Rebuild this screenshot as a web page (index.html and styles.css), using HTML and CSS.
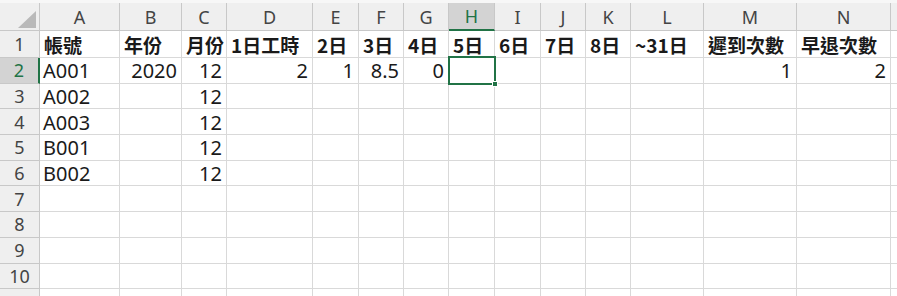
FILE: index.html
```html
<!doctype html>
<html lang="zh-Hant">
  <head>
    <meta charset="UTF-8" />
    <title>出勤紀錄</title>
    <link rel="stylesheet" href="styles.css">
  </head>
  <body>
    <div class="top-strip"></div>
    <div class="sheet" id="sheet">
      <div class="corner"><span class="corner-mark"></span></div>
    </div>
    <script>
      const cols = ["A", "B", "C", "D", "E", "F", "G", "H", "I", "J", "K", "L", "M", "N", "O"];
      const rows = [
        ["帳號", "年份", "月份", "1日工時", "2日", "3日", "4日", "5日", "6日", "7日", "8日", "~31日", "遲到次數", "早退次數"],
        ["A001", 2020, 12, 2, 1, 8.5, 0, "", "", "", "", "", 1, 2],
        ["A002", "", 12],
        ["A003", "", 12],
        ["B001", "", 12],
        ["B002", "", 12],
        [], [], [], [], []
      ];
      const activeCol = 7;
      const activeRow = 1;
      const sheet = document.getElementById("sheet");

      function cell(className, text) {
        const el = document.createElement("div");
        el.className = className;
        el.textContent = text;
        sheet.appendChild(el);
        return el;
      }

      cols.forEach((name, i) => {
        cell(i === activeCol ? "col-head active" : "col-head", name);
      });

      rows.forEach((row, r) => {
        cell(r === activeRow ? "row-head active" : "row-head", r + 1);
        cols.forEach((_, c) => {
          const value = row[c] === undefined ? "" : row[c];
          let cls = "cell";
          if (typeof value === "number") cls += " num";
          if (r === 0) cls += " title";
          const el = cell(cls, value);
          if (r === activeRow && c === activeCol) {
            const box = document.createElement("span");
            box.className = "selection";
            box.innerHTML = '<span class="handle"></span>';
            el.appendChild(box);
          }
        });
      });
    </script>
  </body>
</html>
```

FILE: styles.css
```css
:root {
  --grid-line: #d9d9d9;
  --head-line: #c8c8c8;
  --head-bg: #efefef;
  --head-active: #d3d3d3;
  --excel-green: #217346;
}

* {
  box-sizing: border-box;
}

body {
  margin: 0;
  width: 897px;
  height: 296px;
  overflow: hidden;
  background: #ffffff;
  font-family: "Noto Sans", "Noto Sans CJK TC", sans-serif;
  color: #000000;
}

.top-strip {
  height: 3px;
  background: #f7f7f7;
}

.sheet {
  display: grid;
  grid-template-columns: 40px 80px 62px 45px 86px 46px 45px 45px 46px 46px 45px 45px 73px 93px 94px 90px;
  grid-template-rows: 28px 27px repeat(10, 25.7px) 25.7px;
  width: 981px;
}

.corner {
  position: relative;
  background: var(--head-bg);
  border-right: 1px solid var(--head-line);
  border-bottom: 1px solid var(--head-line);
}

.corner-mark {
  position: absolute;
  right: 3px;
  bottom: 2px;
  width: 0;
  height: 0;
  border-left: 18px solid transparent;
  border-bottom: 17px solid #b9b9b9;
}

.col-head,
.row-head {
  display: flex;
  align-items: center;
  justify-content: center;
  background: var(--head-bg);
  border-right: 1px solid var(--head-line);
  border-bottom: 1px solid var(--head-line);
  font-size: 18px;
  color: #444444;
}

.col-head.active {
  background: var(--head-active);
  color: var(--excel-green);
  border-bottom: 2px solid var(--excel-green);
}

.row-head.active {
  background: var(--head-active);
  color: var(--excel-green);
  border-right: 2px solid var(--excel-green);
}

.cell {
  position: relative;
  display: flex;
  align-items: center;
  padding: 1px 4px 0 3px;
  border-right: 1px solid var(--grid-line);
  border-bottom: 1px solid var(--grid-line);
  font-size: 20px;
  white-space: nowrap;
  color: #1a1a1a;
}

.cell.num {
  justify-content: flex-end;
}

.cell.title {
  font-family: "Noto Sans CJK TC", "Noto Sans", sans-serif;
  font-weight: bold;
  font-size: 19px;
  padding-left: 4px;
}

.selection {
  position: absolute;
  z-index: 2;
  left: -1px;
  top: -2px;
  right: -2px;
  bottom: -2px;
  border: 2px solid var(--excel-green);
}

.handle {
  position: absolute;
  right: -4px;
  bottom: -4px;
  width: 6px;
  height: 6px;
  background: var(--excel-green);
  border: 1px solid #ffffff;
}
```
